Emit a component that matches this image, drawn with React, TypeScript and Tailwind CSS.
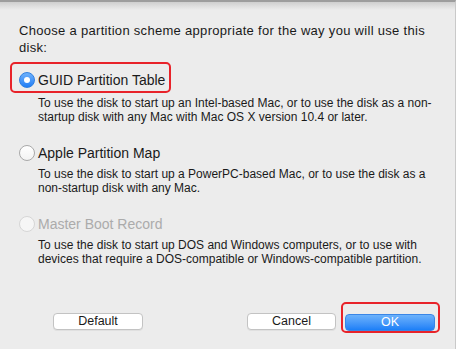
import React from "react";

const font = { fontFamily: '"Liberation Sans", Arial, sans-serif' };

interface OptionProps {
  label: string;
  lines: string[];
  selected?: boolean;
  disabled?: boolean;
  highlighted?: boolean;
  gap: string;
  className?: string;
}

function Radio({ selected, disabled }: { selected?: boolean; disabled?: boolean }) {
  if (selected) {
    return (
      <span className="w-4 h-4 rounded-full bg-gradient-to-b from-[#6db1fb] to-[#1f7ef5] border border-[#2f7fe0] flex items-center justify-center shrink-0">
        <span className="w-[6px] h-[6px] rounded-full bg-white" />
      </span>
    );
  }
  return (
    <span
      className={
        disabled
          ? "w-4 h-4 rounded-full bg-[#f6f6f6] border border-[#d6d6d6] shrink-0"
          : "w-4 h-4 rounded-full bg-gradient-to-b from-white to-[#f3f3f3] border border-[#a9a9a9] shrink-0"
      }
    />
  );
}

function Option({ label, lines, selected, disabled, highlighted, gap, className }: OptionProps) {
  return (
    <div className={className}>
      <div className="relative flex items-center h-[18px] pl-[19px]">
        {highlighted && (
          <div className="absolute left-[10px] top-[-9px] w-[161px] h-[31px] rounded-[5px] border-2 border-[#e8232a]" />
        )}
        <Radio selected={selected} disabled={disabled} />
        <span className={"ml-[3px] text-[14px] leading-[18px] " + (disabled ? "text-[#ababab]" : "text-[#1a1a1a]")}>
          {label}
        </span>
      </div>
      <div className={gap + " pl-[38px] text-[12px] leading-[14px] text-[#1a1a1a]"}>
        {lines.map((l) => (
          <div key={l}>{l}</div>
        ))}
      </div>
    </div>
  );
}

export default function App() {
  return (
    <div style={font} className="relative w-[456px] h-[349px] bg-[#ececec] overflow-hidden border-t-2 border-[#9d9d9d] border-r border-r-[#c9c9c9]">
      {/* window shadow under the title bar */}
      <div className="absolute left-0 right-0 top-0 h-[8px] bg-gradient-to-b from-[#cfcfcf] to-[#ececec]" />

      <div className="relative pt-[20px] pl-[19px] text-[13px] tracking-[0.3px] leading-[17px] text-[#1a1a1a]">
        <div>Choose a partition scheme appropriate for the way you will use this</div>
        <div>disk:</div>
      </div>

      <Option
        className="mt-[15px] relative"
        gap="mt-[7px]"
        label="GUID Partition Table"
        selected
        highlighted
        lines={[
          "To use the disk to start up an Intel-based Mac, or to use the disk as a non-",
          "startup disk with any Mac with Mac OS X version 10.4 or later.",
        ]}
      />
      <Option
        className="mt-[20px]"
        gap="mt-[5px]"
        label="Apple Partition Map"
        lines={[
          "To use the disk to start up a PowerPC-based Mac, or to use the disk as a",
          "non-startup disk with any Mac.",
        ]}
      />
      <Option
        className="mt-[20px]"
        gap="mt-[5px]"
        label="Master Boot Record"
        disabled
        lines={[
          "To use the disk to start up DOS and Windows computers, or to use with",
          "devices that require a DOS-compatible or Windows-compatible partition.",
        ]}
      />

      <div className="mt-[43px] flex items-center pl-[53px] pr-[20px]">
        <button className="w-[90px] h-[17px] rounded-[4px] bg-white border border-[#c3c3c3] text-[12.5px] leading-[15px] text-[#1a1a1a] shadow-[0_1px_0_rgba(0,0,0,0.05)]">
          Default
        </button>
        <div className="flex-1" />
        <button className="w-[89px] h-[17px] rounded-[4px] bg-white border border-[#c3c3c3] text-[12.5px] leading-[15px] text-[#1a1a1a] shadow-[0_1px_0_rgba(0,0,0,0.05)]">
          Cancel
        </button>
        <div className="relative ml-[9px]">
          <div className="absolute left-[-4px] top-[-7px] w-[99px] h-[31px] rounded-[5px] border-2 border-[#e8232a]" />
          <button className="relative w-[90px] h-[17px] rounded-[4px] bg-gradient-to-b from-[#6cb2fb] to-[#1b7ff7] border border-[#3a86e6] text-[12.5px] leading-[15px] text-white">
            OK
          </button>
        </div>
      </div>
    </div>
  );
}
